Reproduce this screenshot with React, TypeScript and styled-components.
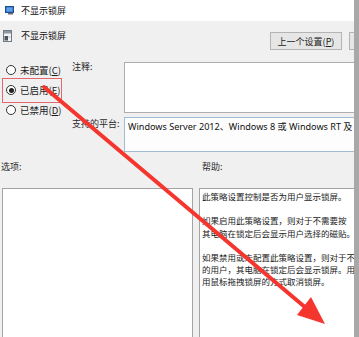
import React from 'react';
import styled, { createGlobalStyle } from 'styled-components';

const GlobalStyle = createGlobalStyle`
  html, body {
    margin: 0;
    padding: 0;
    background: #f0f0f0;
  }

  body {
    font-family: "Noto Sans CJK SC", "Noto Sans", sans-serif;
    color: #1c1c1c;
  }

  *, *:before, *:after {
    box-sizing: border-box;
  }
`;

const Window = styled.div`
  position: relative;
  width: 359px;
  height: 337px;
  display: flex;
  overflow: hidden;
  background: #f0f0f0;
`;

const Main = styled.div`
  flex: 1;
  min-width: 0;
  display: flex;
  flex-direction: column;
  overflow: hidden;
`;

const EdgeStrip = styled.div`
  flex: 0 0 5px;
  background: #a8a8a8;
`;

const TitleBar = styled.div`
  height: 21px;
  flex: none;
  background: #fff;
  display: flex;
  align-items: center;
  padding-left: 5px;
  gap: 6px;
  font-size: 9px;
  line-height: 10px;
  color: #111;
`;

const HeaderRow = styled.div`
  height: 41px;
  flex: none;
  display: flex;
  align-items: flex-start;
`;

const PolicyName = styled.div`
  flex: 1;
  margin-top: 8px;
  padding-left: 3px;
  display: flex;
  align-items: center;
  gap: 9px;
  font-size: 9px;
  line-height: 13px;
  color: #111;
`;

const Buttons = styled.div`
  flex: 0 0 84px;
  min-width: 0;
  margin-top: 11px;
  display: flex;
  gap: 7px;
`;

const NavButton = styled.div`
  flex: none;
  width: 72px;
  height: 18px;
  border: 1px solid #b4b4b4;
  background: #e6e6e6;
  display: flex;
  align-items: center;
  justify-content: center;
  font-size: 9px;
  color: #222;
  white-space: nowrap;
`;

const SettingsGrid = styled.div`
  flex: none;
  display: grid;
  grid-template-columns: 72px 52px 1fr;
  grid-template-rows: 51px 35px;
  row-gap: 4px;
`;

const RadioGroup = styled.div`
  grid-row: 1 / span 2;
  padding-left: 6px;
  display: flex;
  flex-direction: column;
  gap: 4px;
`;

const RadioRow = styled.div<{ $marked?: boolean }>`
  position: relative;
  height: 16px;
  display: flex;
  align-items: center;
  gap: 4px;
  font-size: 9.5px;
  color: #1a1a1a;
  white-space: nowrap;

  &::after {
    content: '';
    display: ${(p) => (p.$marked ? 'block' : 'none')};
    position: absolute;
    left: -4px;
    top: -4px;
    width: 60px;
    height: 25px;
    border: 1px solid #e4676b;
  }
`;

const RadioDot = styled.span<{ $checked?: boolean }>`
  width: 10px;
  height: 10px;
  flex: none;
  border-radius: 50%;
  border: 1px solid #333;
  background: #fff;
  display: flex;
  align-items: center;
  justify-content: center;

  &::before {
    content: '';
    display: ${(p) => (p.$checked ? 'block' : 'none')};
    width: 5px;
    height: 5px;
    border-radius: 50%;
    background: #222;
  }
`;

const FieldLabel = styled.div<{ $top?: number }>`
  padding-top: ${(p) => p.$top ?? 0}px;
  font-size: 9px;
  line-height: 10px;
  color: #2a2a2a;
  white-space: nowrap;
`;

const CommentBox = styled.div`
  margin-right: -8px;
  background: #fff;
  border: 1px solid #adadad;
`;

const PlatformBox = styled.div`
  margin-right: -8px;
  background: #fdfdfd;
  border: 1px solid #9fbcd6;
  padding: 3px 3px 0;
  font-family: "Noto Sans", "Noto Sans CJK SC", sans-serif;
  font-size: 9.1px;
  line-height: 12px;
  color: #111;
  white-space: nowrap;
  overflow: hidden;
`;

const SectionLabels = styled.div`
  flex: none;
  margin-top: 10px;
  height: 26px;
  display: grid;
  grid-template-columns: 193px 1fr;
  column-gap: 6px;
  font-size: 9px;
  line-height: 10px;
  color: #2a2a2a;
`;

const SectionLabel = styled.div<{ $indent: number }>`
  padding-left: ${(p) => p.$indent}px;
`;

const Panes = styled.div`
  flex: 1;
  display: flex;
  gap: 6px;
  padding-left: 2px;
`;

const Pane = styled.div<{ $grow?: boolean }>`
  flex: ${(p) => (p.$grow ? '1' : '0 0 191px')};
  margin-right: ${(p) => (p.$grow ? '-8px' : '0')};
  margin-bottom: -4px;
  background: #fff;
  border: 1px solid #a3a3a3;
  padding: 1px 0 0 2px;
  overflow: hidden;
`;

const HelpLine = styled.div`
  height: 12.2px;
  font-size: 8.5px;
  line-height: 12.2px;
  color: #1a1a1a;
  white-space: nowrap;
`;

const ArrowLayer = styled.svg`
  position: absolute;
  left: 0;
  top: 0;
  width: 359px;
  height: 337px;
  pointer-events: none;
`;

// only the part of each help line that shows inside the dialog's edge
const helpLines = [
  '此策略设置控制是否为用户显示锁屏。',
  '',
  '如果启用此策略设置，则对于不需要按',
  '其电脑在锁定后会显示用户选择的磁贴。',
  '',
  '如果禁用或未配置此策略设置，则对于不',
  '的用户，其电脑在锁定后会显示锁屏。用',
  '用鼠标拖拽锁屏的方式取消锁屏。',
];

function EditorIcon() {
  return (
    <svg width="10" height="9" viewBox="0 0 10 9">
      <rect x="0.5" y="0.5" width="8" height="6" fill="#2f6fc4" stroke="#1d4f96" />
      <rect x="1.5" y="1.5" width="6" height="4" fill="#5fa0e8" />
      <rect x="3" y="7" width="5" height="1.5" fill="#6b6b6b" />
    </svg>
  );
}

function PolicyIcon() {
  return (
    <svg width="9" height="12" viewBox="0 0 9 12">
      <rect x="0.5" y="0.5" width="8" height="11" fill="#f4f4f4" stroke="#6f7a86" />
      <rect x="1" y="1" width="7" height="2.5" fill="#8c97a3" />
      <rect x="1.5" y="6" width="3.5" height="4.5" fill="#4a5562" />
      <rect x="5.5" y="6.5" width="2" height="1" fill="#9aa4ae" />
    </svg>
  );
}

export default function App() {
  return (
    <>
      <GlobalStyle />
      <Window>
        <Main>
          <TitleBar>
            <EditorIcon />
            <span>不显示锁屏</span>
          </TitleBar>

          <HeaderRow>
            <PolicyName>
              <PolicyIcon />
              <span>不显示锁屏</span>
            </PolicyName>
            <Buttons>
              <NavButton>上一个设置(<u>P</u>)</NavButton>
              <NavButton aria-label="下一个设置(N)" />
            </Buttons>
          </HeaderRow>

          <SettingsGrid>
            <RadioGroup>
              <RadioRow>
                <RadioDot />
                <span>未配置(<u>C</u>)</span>
              </RadioRow>
              <RadioRow $marked>
                <RadioDot $checked />
                <span>已启用(<u>E</u>)</span>
              </RadioRow>
              <RadioRow>
                <RadioDot />
                <span>已禁用(<u>D</u>)</span>
              </RadioRow>
            </RadioGroup>
            <FieldLabel>注释:</FieldLabel>
            <CommentBox />
            <FieldLabel $top={2}>支持的平台:</FieldLabel>
            <PlatformBox>Windows Server 2012、Windows 8 或 Windows RT 及</PlatformBox>
          </SettingsGrid>

          <SectionLabels>
            <SectionLabel $indent={1}>选项:</SectionLabel>
            <SectionLabel $indent={3}>帮助:</SectionLabel>
          </SectionLabels>

          <Panes>
            <Pane />
            <Pane $grow>
              {helpLines.map((line, i) => (
                <HelpLine key={i}>{line}</HelpLine>
              ))}
            </Pane>
          </Panes>
        </Main>
        <EdgeStrip />

        {/* red annotation arrow drawn over the dialog */}
        <ArrowLayer viewBox="0 0 359 337">
          <line x1="44" y1="87" x2="306" y2="308" stroke="#f5362f" strokeWidth="4" strokeLinecap="round" />
          <polygon points="325,324 297,315 311,297" fill="#f5362f" />
        </ArrowLayer>
      </Window>
    </>
  );
}
